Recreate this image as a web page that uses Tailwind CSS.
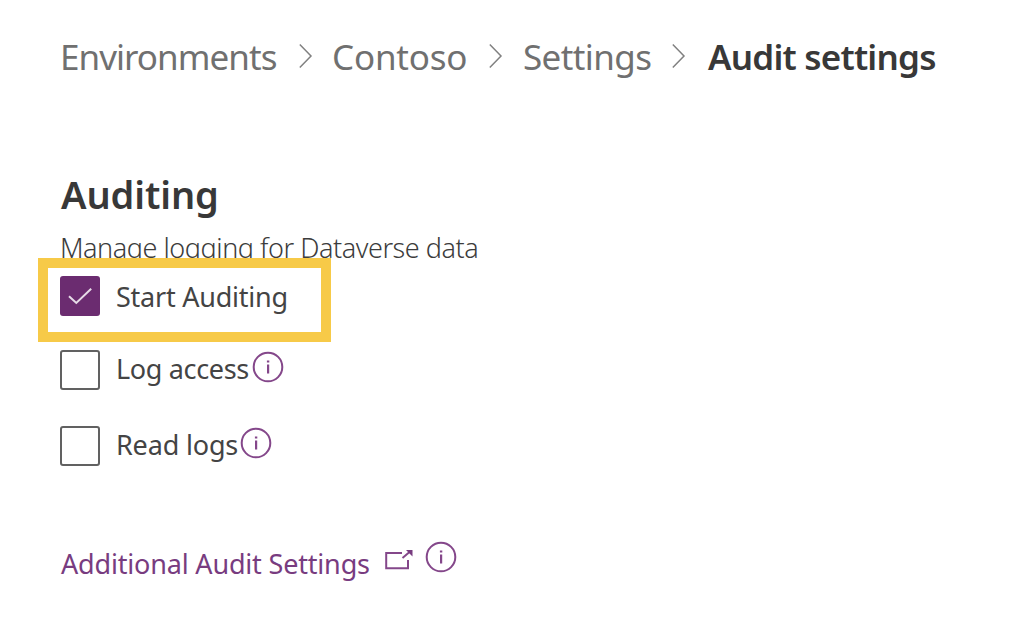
<!DOCTYPE html>
<html lang="en">
<head>
<meta charset="utf-8">
<title>Audit settings</title>
<script src="https://cdn.jsdelivr.net/npm/@tailwindcss/browser@4"></script>
</head>
<body class="bg-white font-['Noto_Sans','Open_Sans',sans-serif] text-[#444] overflow-hidden">
<svg class="hidden">
  <symbol id="chevron" viewBox="0 0 14 26"><path d="M.8 1.5l11.2 11.5L.8 24.5" fill="none" stroke="#808080" stroke-width="1.5"/></symbol>
  <symbol id="info" viewBox="0 0 32 32"><circle cx="16" cy="16" r="14.3" fill="none" stroke="#84478a" stroke-width="2"/><path d="M15 13.5h2.2v9H15zM14.9 9.4h2.4v2.2h-2.4z" fill="#84478a"/></symbol>
</svg>
<main class="w-[1024px] h-[628px] pl-[60px] flex flex-col">
  <nav class="mt-[33px] h-12 flex text-[35px] leading-[48px] text-[#707070] whitespace-nowrap">
    <a class="w-[239px] tracking-[-0.96px]">Environments</a>
    <svg class="w-[14px] h-[26px] mt-[10px]"><use href="#chevron"/></svg>
    <a class="ml-[19px] w-[157px] tracking-[-0.2px]">Contoso</a>
    <svg class="w-[14px] h-[26px] mt-[10px]"><use href="#chevron"/></svg>
    <a class="ml-5 w-[149px] tracking-[-0.6px]">Settings</a>
    <svg class="w-[14px] h-[26px] mt-[10px]"><use href="#chevron"/></svg>
    <span class="ml-[22px] font-semibold text-[#383838] tracking-[-0.78px]">Audit settings</span>
  </nav>
  <h1 class="mt-[89px] pl-px h-12 text-[38px] leading-[48px] font-semibold text-[#383838] tracking-[-0.1px]">Auditing</h1>
  <p class="mt-3 h-9 text-[27px] leading-9 font-light text-[#3c3c3c] tracking-[-0.45px]">Manage logging for Dataverse data</p>
  <div class="relative mt-[10px] h-10 flex">
    <div class="absolute -left-[22px] -top-[18px] w-[293px] h-[84px] border-10 border-[#f7ca48]"></div>
    <span class="size-10 rounded-[3px] bg-[#6b2c70] flex items-center justify-center">
      <svg class="w-6 h-[18px]" viewBox="0 0 24 18"><path d="M1 9.2l7.3 6.8L23.2 1.8" fill="none" stroke="#e6dbe7" stroke-width="2"/></svg>
    </span>
    <span class="ml-4 mt-[3px] text-[27px] leading-9 tracking-[-0.23px]">Start Auditing</span>
  </div>
  <div class="mt-[34px] h-10 flex">
    <span class="size-10 rounded-[3px] border-2 border-[#616161]"></span>
    <span class="ml-4 mt-px w-[136px] text-[27px] leading-9 tracking-[-0.33px]">Log access</span>
    <svg class="size-8 mt-[1px]"><use href="#info"/></svg>
  </div>
  <div class="mt-9 h-10 flex">
    <span class="size-10 rounded-[3px] border-2 border-[#616161]"></span>
    <span class="ml-4 mt-px w-[124px] text-[27px] leading-9 tracking-[-0.17px]">Read logs</span>
    <svg class="size-8 mt-[1px]"><use href="#info"/></svg>
  </div>
  <div class="mt-[74px] h-12 flex text-[#783c80]">
    <a class="mt-[6px] ml-px w-[323px] text-[27px] leading-9 tracking-[-0.18px]">Additional Audit Settings</a>
    <svg class="w-[30px] h-[22px] mt-[9px]" viewBox="0 0 30 22"><path d="M18 4H2.2v15.2h21.8V11" fill="none" stroke="#84478a" stroke-width="2"/><path d="M18.5 9l7-6" fill="none" stroke="#84478a" stroke-width="2"/><path d="M22 1h6.5v6.5z" fill="#783c80"/></svg>
    <svg class="ml-[11px] mt-px size-8"><use href="#info"/></svg>
  </div>
</main>
</body>
</html>
